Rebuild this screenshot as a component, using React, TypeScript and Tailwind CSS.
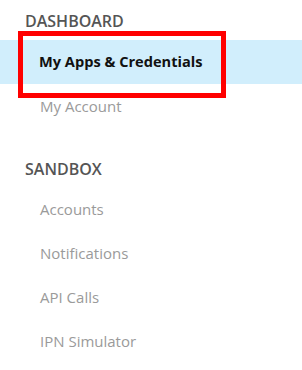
import React from 'react'

const sections = [
  {
    title: 'Dashboard',
    items: [
      { id: 'apps', label: 'My Apps & Credentials', active: true },
      { id: 'account', label: 'My Account' }
    ]
  },
  {
    title: 'Sandbox',
    items: [
      { id: 'accounts', label: 'Accounts' },
      { id: 'notifications', label: 'Notifications' },
      { id: 'api', label: 'API Calls' },
      { id: 'ipn', label: 'IPN Simulator' }
    ]
  }
]

export default function App() {
  return (
    <div className="relative w-[302px] h-[370px] overflow-hidden bg-white pt-[11px] font-['Open_Sans',sans-serif]">
      {sections.map((section, idx) => (
        <div key={section.title} className={idx > 0 ? 'mt-[31px]' : ''}>
          <h3 className="pl-[25px] h-[20px] leading-[20px] text-[16px] font-semibold uppercase text-[#555555]">
            {section.title}
          </h3>
          <ul className={idx > 0 ? 'mt-[8px]' : 'mt-[9px]'}>
            {section.items.map((item) => (
              <li
                key={item.id}
                className={`h-[44px] flex items-center ${
                  item.active
                    ? 'bg-[#d1eefc] pl-[39px] font-bold text-[14.6px] text-[#111111]'
                    : 'pl-[40px] text-[15px] text-[#9a9a9a]'
                }`}
              >
                {item.label}
              </li>
            ))}
          </ul>
        </div>
      ))}

      {/* annotation box */}
      <div className="absolute left-[18px] top-[31px] w-[208px] h-[67px] border-[5px] border-[#ff0000]" />
    </div>
  )
}
